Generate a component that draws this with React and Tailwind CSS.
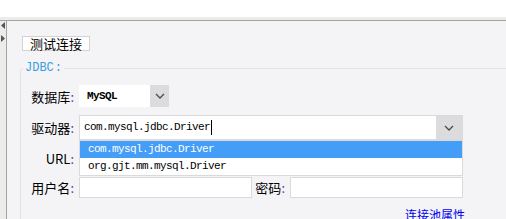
import React from "react";

const cjk = { fontFamily: '"Noto Sans CJK SC", "Noto Sans", sans-serif' };
const mono = { fontFamily: '"Liberation Mono", "DejaVu Sans Mono", monospace' };

function Chevron() {
  return (
    <svg width="10" height="6" viewBox="0 0 10 6" fill="none">
      <path d="M1 1l4 4 4-4" stroke="#4b4b4b" strokeWidth="1.3" />
    </svg>
  );
}

function Label({ text, width = "w-[58px]" }) {
  return (
    <div className={`${width} shrink-0 text-right text-[13px] leading-none text-black pr-[5px]`} style={cjk}>
      {text}
      <span className="text-[#8a2b8a]">:</span>
    </div>
  );
}

export default function App() {
  return (
    <div className="w-[506px] h-[219px] overflow-hidden bg-white flex flex-col">
      <div className="h-[17px] shrink-0 bg-white" />
      <div className="h-[4px] shrink-0 bg-[#ececec] border-b border-[#a6a39b]" />
      <div className="flex flex-1 min-h-0">
        {/* left collapse strip */}
        <div className="w-[7px] shrink-0 bg-[#ececec] border-r border-[#a6a39b] flex flex-col items-center pt-[1px] gap-[6px]">
          <svg width="4" height="7" viewBox="0 0 4 7">
            <path d="M4 0v7L0 3.5z" fill="#555" />
          </svg>
          <svg width="4" height="7" viewBox="0 0 4 7">
            <path d="M0 0v7l4-3.5z" fill="#555" />
          </svg>
        </div>

        <div className="flex-1 bg-[#f4f4f6] pl-[13px] pt-[15px] flex flex-col">
          <button
            className="self-start w-[68px] h-[20px] bg-white border border-[#d3d3d3] text-[13px] leading-none text-black ml-[2px]"
            style={cjk}
          >
            测试连接
          </button>

          <fieldset className="mt-[10px] border-l border-t border-[#e2e2e6] rounded-tl-[4px] w-[600px] pl-0 relative">
            <legend className="ml-[2px] px-[2px] text-[12px] leading-[14px] text-[#3a9de0]" style={mono}>
              JDBC<span className="ml-[1px]">:</span>
            </legend>

            <div className="pt-[10px] flex flex-col">
              {/* database */}
              <div className="flex items-center h-[22px]">
                <Label text="数据库" />
                <div className="flex h-[22px] w-[90px] bg-white">
                  <div className="flex-1 flex items-center pl-[8px] text-[11px] font-bold tracking-[-0.6px] text-black" style={mono}>
                    MySQL
                  </div>
                  <div className="w-[19px] bg-[#dcdcde] flex items-center justify-center">
                    <Chevron />
                  </div>
                </div>
              </div>

              {/* driver */}
              <div className="flex items-center h-[25px] mt-[8px] relative">
                <Label text="驱动器" />
                <div className="flex h-[25px] w-[384px] bg-white border border-[#dadada] relative">
                  <div className="flex-1 flex items-center pl-[4px] text-[11px] tracking-[-0.6px] text-black" style={mono}>
                    com.mysql.jdbc.Driver
                    <span className="w-[1px] h-[15px] bg-black ml-[1px]" />
                  </div>
                  <div className="w-[26px] bg-[#dcdcde] flex items-center justify-center">
                    <Chevron />
                  </div>

                  {/* open dropdown list */}
                  <div className="absolute left-[-1px] top-[24px] w-[384px] bg-white border border-[#dadada] z-10 pb-[1px]">
                    <div className="h-[17px] bg-[#449df7] text-white flex items-center pl-[8px] text-[11px] tracking-[-0.6px]" style={mono}>
                      com.mysql.jdbc.Driver
                    </div>
                    <div className="h-[16px] text-black flex items-center pl-[8px] text-[11px] tracking-[-0.6px]" style={mono}>
                      org.gjt.mm.mysql.Driver
                    </div>
                  </div>
                </div>
              </div>

              {/* url */}
              <div className="flex items-center h-[22px] mt-[7px]">
                <Label text="URL" />
                <div className="h-[22px] w-[384px] bg-white border border-[#dadada]" />
              </div>

              {/* user / password */}
              <div className="flex items-center h-[21px] mt-[8px]">
                <Label text="用户名" />
                <div className="h-[21px] w-[173px] bg-white border border-[#dadada]" />
                <div className="w-[38px] shrink-0 text-right text-[13px] leading-none text-black pr-[5px]" style={cjk}>
                  密码<span className="text-[#8a2b8a]">:</span>
                </div>
                <div className="h-[21px] w-[173px] bg-white border border-[#dadada]" />
              </div>

              <div className="w-[444px] text-right mt-[11px] text-[12px] leading-none text-[#0000ee]" style={cjk}>
                连接池属性
              </div>
            </div>
          </fieldset>
        </div>
      </div>
    </div>
  );
}
